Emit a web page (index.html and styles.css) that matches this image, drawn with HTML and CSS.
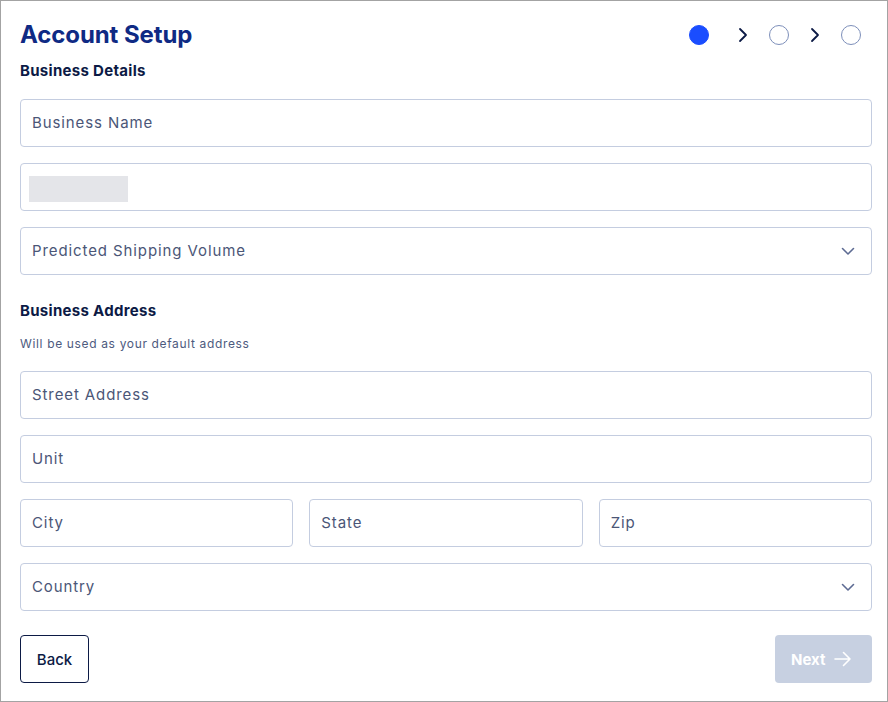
FILE: index.html
```html
<!DOCTYPE html>
<html lang="en">
<head>
<meta charset="utf-8">
<title>Account Setup</title>
<link rel="stylesheet" href="styles.css">
</head>
<body>
<div class="frame">
  <header class="header">
    <h1 class="title">Account Setup</h1>
    <div class="stepper">
      <span class="step step-active"></span>
      <svg class="step-sep step-sep-first" width="24" height="24" viewBox="0 0 24 24"><path d="M9 6 L15 12 L9 18" fill="none" stroke="#0c1a45" stroke-width="1.8" stroke-linecap="round" stroke-linejoin="round"/></svg>
      <span class="step"></span>
      <svg class="step-sep" width="24" height="24" viewBox="0 0 24 24"><path d="M9 6 L15 12 L9 18" fill="none" stroke="#0c1a45" stroke-width="1.8" stroke-linecap="round" stroke-linejoin="round"/></svg>
      <span class="step"></span>
    </div>
  </header>

  <h2 class="section-title section-title-first">Business Details</h2>
  <div class="fields">
    <div class="field"><span class="placeholder">Business Name</span></div>
    <div class="field"><span class="skeleton"></span></div>
    <div class="field field-select"><span class="placeholder">Predicted Shipping Volume</span>
      <svg class="caret" width="14" height="9" viewBox="0 0 14 9"><path d="M1.5 1.5 L7 7 L12.5 1.5" fill="none" stroke="#5d6b93" stroke-width="1.6" stroke-linecap="round" stroke-linejoin="round"/></svg>
    </div>
  </div>

  <h2 class="section-title section-title-second">Business Address</h2>
  <p class="hint">Will be used as your default address</p>
  <div class="fields">
    <div class="field"><span class="placeholder">Street Address</span></div>
    <div class="field"><span class="placeholder">Unit</span></div>
    <div class="row">
      <div class="field"><span class="placeholder">City</span></div>
      <div class="field"><span class="placeholder">State</span></div>
      <div class="field"><span class="placeholder">Zip</span></div>
    </div>
    <div class="field field-select"><span class="placeholder">Country</span>
      <svg class="caret" width="14" height="9" viewBox="0 0 14 9"><path d="M1.5 1.5 L7 7 L12.5 1.5" fill="none" stroke="#5d6b93" stroke-width="1.6" stroke-linecap="round" stroke-linejoin="round"/></svg>
    </div>
  </div>

  <footer class="actions">
    <button class="btn btn-back" type="button">Back</button>
    <button class="btn btn-next" type="button">Next
      <svg class="arrow" width="18" height="16" viewBox="0 0 18 16"><path d="M1 8 H16 M9.5 1.5 L16 8 L9.5 14.5" fill="none" stroke="#ffffff" stroke-width="1.6" stroke-linecap="round" stroke-linejoin="round"/></svg>
    </button>
  </footer>
</div>
</body>
</html>
```

FILE: styles.css
```css
* { box-sizing: border-box; }

html, body {
  margin: 0;
  padding: 0;
  background: #ffffff;
}

body {
  font-family: "Inter", "Noto Sans", sans-serif;
  color: #0c1a45;
}

.frame {
  width: 888px;
  height: 702px;
  border: 1px solid #a3a3a3;
  padding: 16px 15px 0 19px;
}

.header {
  display: flex;
  align-items: center;
  justify-content: space-between;
}

.title {
  margin: 0;
  font-size: 24px;
  line-height: 36px;
  font-weight: 700;
  color: #0f2a84;
  letter-spacing: -0.1px;
}

.stepper {
  display: flex;
  align-items: center;
  gap: 14px;
  margin-right: 11px;
}

.step {
  width: 20px;
  height: 20px;
  border-radius: 50%;
  border: 1.5px solid #7d8fba;
  display: block;
}

.step-active {
  background: #1a4dff;
  border-color: #1a4dff;
}

.step-sep { display: block; }
.step-sep-first { margin-left: 8px; }

.section-title {
  margin: 0;
  font-size: 15px;
  line-height: 20px;
  font-weight: 700;
  color: #0c1a45;
  letter-spacing: 0.3px;
}

.section-title-first { margin-top: 8px; margin-bottom: 18px; }
.section-title-second { margin-top: 26px; }

.hint {
  margin: 15px 0 19px;
  font-size: 12px;
  line-height: 16px;
  color: #4d5a7e;
  letter-spacing: 0.65px;
}

.fields {
  display: flex;
  flex-direction: column;
  gap: 16px;
}

.field {
  height: 48px;
  border: 1px solid #c4cde0;
  border-radius: 4px;
  display: flex;
  align-items: center;
  padding: 0 16px 0 11px;
  background: #ffffff;
}

.placeholder {
  font-size: 15px;
  color: #4b5677;
  letter-spacing: 0.9px;
  margin-top: -1px;
}

.field-select {
  justify-content: space-between;
}

.caret { display: block; }

.skeleton {
  display: block;
  width: 99px;
  height: 26px;
  margin-left: -3px;
  margin-top: 3px;
  background: #e4e5e9;
}

.row {
  display: grid;
  grid-template-columns: 1fr 1fr 1fr;
  gap: 16px;
}

.actions {
  display: flex;
  justify-content: space-between;
  margin-top: 24px;
}

.btn {
  height: 48px;
  border-radius: 4px;
  font-family: inherit;
  font-size: 15px;
  display: flex;
  align-items: center;
  cursor: pointer;
}

.btn-back {
  width: 69px;
  justify-content: center;
  border: 1px solid #0c1a45;
  background: #ffffff;
  color: #0c1a45;
  font-weight: 500;
}

.btn-next {
  width: 97px;
  padding: 0 20px 0 16px;
  justify-content: space-between;
  border: none;
  background: #c7d0e1;
  color: #ffffff;
  font-weight: 700;
}

.arrow { display: block; }
```
